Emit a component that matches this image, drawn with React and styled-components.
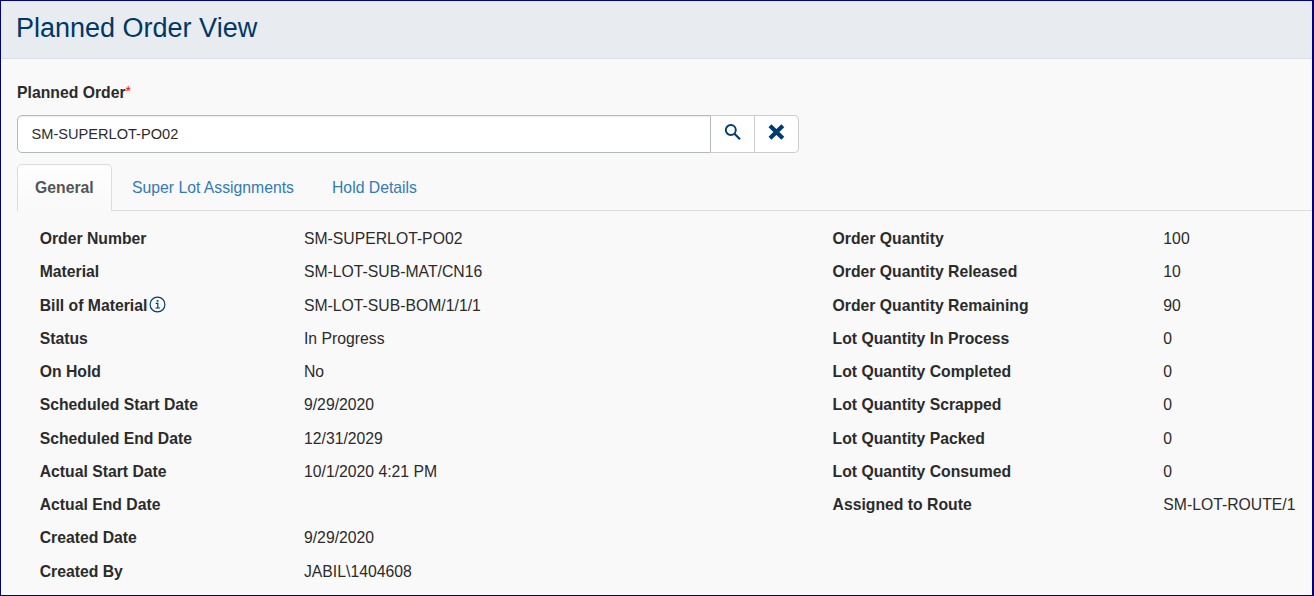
import React from "react";
import styled, { createGlobalStyle } from "styled-components";

const GlobalStyle = createGlobalStyle`
  *, *::before, *::after { box-sizing: border-box; }
  body {
    margin: 0;
    background: #f9f9f9;
    color: #2b2b2b;
    font: 15.75px/20px "Liberation Sans", Arial, sans-serif;
  }
`;

const Page = styled.main`
  width: 1314px;
  height: 596px;
  overflow: hidden;
  border: 1px solid #000080;
  border-right-width: 2px;
  background: #f9f9f9;
`;

const Header = styled.header`
  height: 58px;
  padding: 11px 15px 0;
  background: #e8ebf0;
  border-bottom: 1px solid #dcdfe6;
`;

const Title = styled.h1`
  margin: 0;
  font-size: 27px;
  line-height: 32px;
  font-weight: 400;
  color: #003865;
`;

const Search = styled.section`
  padding: 24px 16px 0;
`;

const FieldLabel = styled.label`
  display: block;
  height: 32px;
  font-weight: 700;
`;

const Required = styled.sup`
  font-size: 14px;
  line-height: 0;
  font-weight: 400;
  vertical-align: 2px;
  color: #ff0000;
`;

const InputGroup = styled.div`
  display: flex;
  width: 782px;
  height: 38px;
`;

const Input = styled.input`
  flex: 1;
  min-width: 0;
  padding: 0 13.5px 0;
  border: 1px solid #b5b8bb;
  border-radius: 5px 0 0 5px;
  background: #fff;
  box-shadow: inset 0 1px 1px rgba(0, 0, 0, 0.075);
  color: #2b2b2b;
  font: inherit;
  font-size: 14.6px;
  outline: none;
`;

const AddonButton = styled.button`
  display: flex;
  align-items: center;
  justify-content: center;
  width: 44px;
  padding: 0 0 5px 0;
  border: 1px solid #ccc;
  border-left: 0;
  border-radius: ${(p) => (p.$last ? "0 5px 5px 0" : "0")};
  background: #fff;
  color: #003c70;
`;

const Tabs = styled.nav`
  display: flex;
  height: 47px;
  margin: 11px 0 0 16px;
  border-bottom: 1px solid #ddd;
`;

const Tab = styled.a`
  width: ${(p) => p.$width}px;
  height: ${(p) => (p.$active ? 47 : 46)}px;
  margin-right: 2px;
  padding: 13px 17px 0;
  border: 1px solid ${(p) => (p.$active ? "#ddd" : "transparent")};
  border-bottom: 0;
  border-radius: 5px 5px 0 0;
  background: ${(p) => (p.$active ? "linear-gradient(#fefefe, #f9f9f9)" : "none")};
  color: ${(p) => (p.$active ? "#555" : "#337ab7")};
  font-weight: ${(p) => (p.$active ? 700 : 400)};
  white-space: nowrap;
`;

const Details = styled.section`
  display: flex;
  padding: 12px 0 0 38.7px;
`;

const Column = styled.dl`
  width: ${(p) => p.$width}px;
  margin: 0;
`;

const Row = styled.div`
  display: grid;
  grid-template-columns: ${(p) => p.$label}px 1fr;
  height: 33.27px;
  padding-top: 6px;
  white-space: nowrap;
`;

const Term = styled.dt`
  display: flex;
  font-weight: 700;
`;

const Value = styled.dd`
  margin: 0;
`;

const InfoSvg = styled.svg`
  margin: 0 0 0 1.5px;
`;

const SearchIcon = () => (
  <svg width="18" height="18" viewBox="0 0 18 18" fill="none" stroke="currentColor" strokeWidth="1.9">
    <circle cx="6.8" cy="7" r="5" />
    <path d="M10.5 10.7L16 16.2" strokeWidth="2.2" />
  </svg>
);

const ClearIcon = () => (
  <svg width="18" height="18" viewBox="0 0 18 18" fill="none" stroke="currentColor" strokeWidth="4.2">
    <path d="M2 2.8L14.8 15.2M14.8 2.8L2 15.2" />
  </svg>
);

const InfoIcon = () => (
  <InfoSvg width="17" height="17" viewBox="0 0 17 17" fill="none" stroke="#003c70">
    <circle cx="8.5" cy="8.5" r="7.4" strokeWidth="1.2" />
    <path d="M6.7 7.3H8.8V12M6.5 12H11" strokeWidth="1.2" />
    <path d="M7.7 4.9H9.5" strokeWidth="1.6" />
  </InfoSvg>
);

const orderDetails = [
  ["Order Number", "SM-SUPERLOT-PO02"],
  ["Material", "SM-LOT-SUB-MAT/CN16"],
  ["Bill of Material", "SM-LOT-SUB-BOM/1/1/1", true],
  ["Status", "In Progress"],
  ["On Hold", "No"],
  ["Scheduled Start Date", "9/29/2020"],
  ["Scheduled End Date", "12/31/2029"],
  ["Actual Start Date", "10/1/2020 4:21 PM"],
  ["Actual End Date", ""],
  ["Created Date", "9/29/2020"],
  ["Created By", "JABIL\\1404608"],
];

const quantities = [
  ["Order Quantity", "100"],
  ["Order Quantity Released", "10"],
  ["Order Quantity Remaining", "90"],
  ["Lot Quantity In Process", "0"],
  ["Lot Quantity Completed", "0"],
  ["Lot Quantity Scrapped", "0"],
  ["Lot Quantity Packed", "0"],
  ["Lot Quantity Consumed", "0"],
  ["Assigned to Route", "SM-LOT-ROUTE/1"],
];

const DetailColumn = ({ items, width, label }) => (
  <Column $width={width}>
    {items.map(([name, value, info]) => (
      <Row key={name} $label={label}>
        <Term>
          {name}
          {info && <InfoIcon />}
        </Term>
        <Value>{value}</Value>
      </Row>
    ))}
  </Column>
);

export default function App() {
  return (
    <>
      <GlobalStyle />
      <Page>
        <Header>
          <Title>Planned Order View</Title>
        </Header>
        <Search>
          <FieldLabel htmlFor="order">
            Planned Order<Required>*</Required>
          </FieldLabel>
          <InputGroup>
            <Input id="order" defaultValue="SM-SUPERLOT-PO02" />
            <AddonButton aria-label="Search"><SearchIcon /></AddonButton>
            <AddonButton aria-label="Clear" $last><ClearIcon /></AddonButton>
          </InputGroup>
        </Search>
        <Tabs>
          <Tab $active $width={95}>General</Tab>
          <Tab $width={198}>Super Lot Assignments</Tab>
          <Tab $width={122}>Hold Details</Tab>
        </Tabs>
        <Details>
          <DetailColumn items={orderDetails} width={793.8} label={264.3} />
          <DetailColumn items={quantities} width={480} label={330.8} />
        </Details>
      </Page>
    </>
  );
}
